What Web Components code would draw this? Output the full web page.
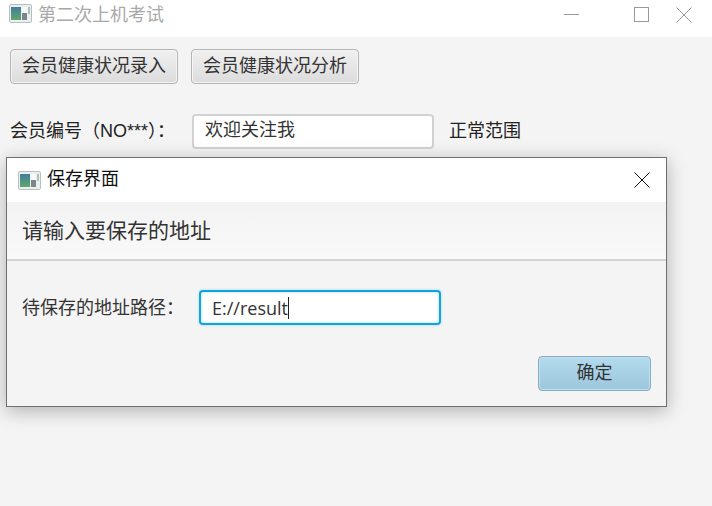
<!DOCTYPE html>
<html lang="zh">
<head>
<meta charset="utf-8">
<title>第二次上机考试</title>
<style>
html, body { margin: 0; height: 100%; background: #f4f4f4; }
body {
  width: 712px;
  height: 506px;
  overflow: hidden;
  position: relative;
  font: 18px/24px "Liberation Sans", "Noto Sans CJK SC", sans-serif;
  color: #333;
}
</style>
</head>
<body>
<app-window caption="第二次上机考试">
  <div slot="toolbar">
    <fx-button>会员健康状况录入</fx-button>
    <fx-button>会员健康状况分析</fx-button>
  </div>
  <fx-field slot="row" label="会员编号（NO***）：" value="欢迎关注我" note="正常范围"></fx-field>
</app-window>

<save-dialog caption="保存界面" heading="请输入要保存的地址">
  <fx-path label="待保存的地址路径：" value="E://result"></fx-path>
  <fx-button slot="actions" default>确定</fx-button>
</save-dialog>

<script>
const ICON = `
<svg width="23" height="19" viewBox="0 0 23 19" aria-hidden="true">
  <defs><linearGradient id="g" x1="0" y1="0" x2="0" y2="1">
    <stop offset="0" stop-color="#3f7f9a"/><stop offset="1" stop-color="#62a56c"/>
  </linearGradient></defs>
  <rect x=".5" y=".5" width="22" height="18" rx="1.5" fill="#eceff0" stroke="#b9bec1"/>
  <rect x="2" y="3" width="10" height="13" fill="url(#g)"/>
  <rect x="13" y="9" width="5" height="7" fill="#7a8688"/>
  <rect x="13" y="3" width="5" height="6" fill="#f6f7f7"/>
  <rect x="19" y="3" width="2" height="7" fill="#a9c7b0"/>
</svg>`;

class AppWindow extends HTMLElement {
  constructor () {
    super();
    this.attachShadow({mode: 'open'}).innerHTML = `
<style>
:host { display: block; height: 506px; background: #f4f4f4; }
.bar { display: flex; align-items: flex-start; height: 37px; padding: 4px 0 0 9px; box-sizing: border-box; background: #fff; color: #a9a9a9; }
.bar > svg { margin-right: 6px; }
.caption { flex: 1; position: relative; top: -1px; }
.ctl { display: flex; width: 70px; padding-top: 3px; justify-content: center; }
.ctl:last-child { width: 36px; justify-content: flex-start; }
.body { padding: 12px 10px 0; }
.row { margin-top: 30px; }
</style>
<div class="bar">
  ${ICON}
  <span class="caption">${this.getAttribute('caption')}</span>
  <span class="ctl"><svg width="15" height="15"><path d="M0 7.5H15" stroke="#999"/></svg></span>
  <span class="ctl"><svg width="15" height="15"><rect x=".5" y=".5" width="14" height="14" fill="none" stroke="#999"/></svg></span>
  <span class="ctl"><svg width="16" height="16"><path d="M.5 .5L15.5 15.5M15.5 .5L.5 15.5" stroke="#999"/></svg></span>
</div>
<div class="body">
  <slot name="toolbar"></slot>
  <div class="row"><slot name="row"></slot></div>
</div>`;
  }
}

class FxButton extends HTMLElement {
  constructor () {
    super();
    this.attachShadow({mode: 'open'}).innerHTML = `
<style>
:host {
  display: inline-flex;
  align-items: center;
  justify-content: center;
  box-sizing: border-box;
  height: 35px;
  padding: 0 11px 2px;
  margin-right: 8px;
  border: 1px solid #b4b4b4;
  border-radius: 4px;
  background: linear-gradient(#f0f0f0, #dcdcdc);
  box-shadow: inset 0 0 0 1px #f6f6f6;
  color: #333;
}
:host([default]) {
  width: 113px;
  margin: 0;
  padding: 0 0 2px;
  border-color: #8aacbf;
  background: linear-gradient(#b4dbee, #9cc6dc);
  box-shadow: inset 0 0 0 1px #bfe0f0;
}
</style>
<slot></slot>`;
  }
}

class FxField extends HTMLElement {
  constructor () {
    super();
    this.attachShadow({mode: 'open'}).innerHTML = `
<style>
:host { display: flex; align-items: center; height: 35px; color: #222; }
.label { width: 182px; white-space: nowrap; position: relative; top: -1px; }
.input {
  box-sizing: border-box;
  width: 242px;
  height: 35px;
  line-height: 29px;
  padding: 0 11px;
  background: #fff;
  border: 2px solid #d2d2d2;
  border-radius: 4px;
  color: #333;
}
.note { margin-left: 15px; position: relative; top: -1px; }
</style>
<span class="label">${this.getAttribute('label')}</span>
<span class="input">${this.getAttribute('value')}</span>
<span class="note">${this.getAttribute('note')}</span>`;
  }
}

class FxPath extends HTMLElement {
  constructor () {
    super();
    this.attachShadow({mode: 'open'}).innerHTML = `
<style>
:host { display: flex; align-items: center; height: 35px; color: #333; }
.label { width: 177px; white-space: nowrap; }
.input {
  box-sizing: border-box;
  display: flex;
  align-items: center;
  width: 242px;
  height: 35px;
  padding: 0 11px;
  background: #fff;
  border: 2px solid #10a5d9;
  border-radius: 4px;
  box-shadow: inset 0 0 2px 1px #cfeaf6, 0 0 3px #9fd9ef;
  font-family: "Open Sans", "Noto Sans", sans-serif;
}
.caret { width: 1px; height: 22px; background: #222; }
</style>
<span class="label">${this.getAttribute('label')}</span>
<span class="input"><span>${this.getAttribute('value')}</span><span class="caret"></span></span>`;
  }
}

class SaveDialog extends HTMLElement {
  constructor () {
    super();
    this.attachShadow({mode: 'open'}).innerHTML = `
<style>
:host {
  position: absolute;
  left: 6px;
  top: 157px;
  box-sizing: border-box;
  width: 661px;
  height: 250px;
  display: flex;
  flex-direction: column;
  background: #f4f4f4;
  border: 1px solid #6f6f6f;
  box-shadow: 0 4px 18px rgba(0, 0, 0, .28);
  color: #333;
}
.bar { display: flex; align-items: center; height: 44px; padding: 0 16px 0 11px; background: #fff; color: #111; }
.bar > svg:first-child { margin-right: 6px; }
.bar span { flex: 1; position: relative; top: -1px; }
.head {
  box-sizing: border-box;
  height: 59px;
  padding: 0 15px;
  display: flex;
  align-items: center;
  font-size: 21px;
  background: linear-gradient(#f3f3f3, #f9f9f9);
  border-bottom: 2px solid #d4d4d4;
}
.content { flex: 1; padding: 29px 15px 0; }
.actions { display: flex; justify-content: flex-end; padding: 0 15px 15px; }
</style>
<div class="bar">
  ${ICON}
  <span>${this.getAttribute('caption')}</span>
  <svg width="16" height="16"><path d="M.5 .5L15.5 15.5M15.5 .5L.5 15.5" stroke="#111"/></svg>
</div>
<div class="head">${this.getAttribute('heading')}</div>
<div class="content"><slot></slot></div>
<div class="actions"><slot name="actions"></slot></div>`;
  }
}

customElements.define('app-window', AppWindow);
customElements.define('fx-button', FxButton);
customElements.define('fx-field', FxField);
customElements.define('fx-path', FxPath);
customElements.define('save-dialog', SaveDialog);
</script>
</body>
</html>
